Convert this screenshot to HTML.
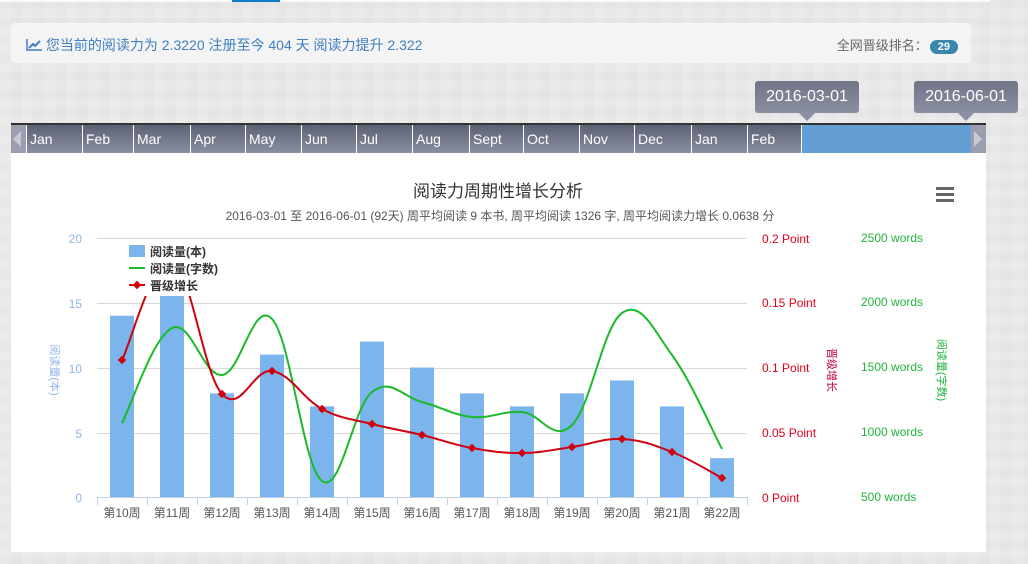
<!DOCTYPE html>
<html><head><meta charset="utf-8">
<style>
*{margin:0;padding:0;box-sizing:border-box}
body{width:1028px;height:564px;overflow:hidden;background:#e8e8e8;font-family:"Liberation Sans","Noto Sans CJK SC",sans-serif;position:relative;
background-image:linear-gradient(90deg,rgba(255,255,255,.12) 50%,transparent 50%),linear-gradient(rgba(0,0,0,.015) 50%,transparent 50%);background-size:22px 22px,18px 18px}
.top{position:absolute;left:0;top:0;width:990px;height:2px;background:#fafafa}
.topb{position:absolute;left:232px;top:0;width:48px;height:2px;background:#0e7bc6}
.info{position:absolute;left:11px;top:23px;width:960px;height:40px;background:#f4f4f4;border-radius:3px}
.info .l{position:absolute;left:15px;top:12px;font-size:14px;color:#3f7fc0}
.info .r{position:absolute;right:13px;top:12px;font-size:13px;color:#666}
.badge{display:inline-block;background:#3a87ad;color:#fff;font-weight:bold;font-size:11px;border-radius:9px;padding:1px 8px;margin-left:2px}
.tip{position:absolute;top:81px;height:32px;background:linear-gradient(#6f7587,#8a8fa1);color:#fff;font-size:16px;border-radius:3px;text-align:center;line-height:32px}
.tip:after{content:"";position:absolute;bottom:-8px;left:50%;margin-left:-8px;border:8px solid transparent;border-top-color:#8a8fa1;border-bottom:0}
.bar{position:absolute;left:11px;top:123px;width:975px;height:30px;background:linear-gradient(#5c6173,#8a8fa1);border-top:2px solid #333}
.bar span{position:absolute;top:0;height:28px;border-left:1px solid #fff;color:#fff;font-size:14px;line-height:28px;padding-left:3px}
.panel{position:absolute;left:11px;top:153px;width:975px;height:399px;background:#fff}
</style></head><body>
<div class="top"></div><div class="topb"></div>
<div class="info"><div class="l"><svg width="16" height="12" viewBox="0 0 16 12" style="vertical-align:-1px"><path d="M1 0V11H16" stroke="#3f7fc0" fill="none" stroke-width="1.5"/><path d="M3 9L7 5L9 7L14 2" stroke="#3f7fc0" fill="none" stroke-width="2"/></svg> 您当前的阅读力为 2.3220 注册至今 404 天 阅读力提升 2.322</div>
<div class="r">全网晋级排名：<span class="badge">29</span></div></div>
<div class="tip" style="left:755px;width:104px">2016-03-01</div>
<div class="tip" style="left:914px;width:104px">2016-06-01</div>
<div class="bar">
<div style="position:absolute;left:0;top:0;width:15px;height:28px;background:#9a9eae"><div style="position:absolute;left:2px;top:6px;border:8px solid transparent;border-right:8px solid #c8cad3;border-left:0"></div></div>
<span style="left:15px">Jan</span><span style="left:71px">Feb</span><span style="left:122px">Mar</span><span style="left:179px">Apr</span><span style="left:234px">May</span><span style="left:290px">Jun</span><span style="left:345px">Jul</span><span style="left:401px">Aug</span><span style="left:458px">Sept</span><span style="left:512px">Oct</span><span style="left:568px">Nov</span><span style="left:623px">Dec</span><span style="left:680px">Jan</span><span style="left:736px">Feb</span>
<div style="position:absolute;left:790px;top:0;width:170px;height:28px;background:#649fd4;border-left:1px solid #fff"></div>
<div style="position:absolute;left:960px;top:0;width:15px;height:28px;background:#9a9eae"><div style="position:absolute;left:3px;top:6px;border:8px solid transparent;border-left:8px solid #c8cad3;border-right:0"></div></div>
</div>
<div class="panel"></div>
<svg id="c" style="position:absolute;left:0;top:0" width="1028" height="564" font-family="Liberation Sans,Noto Sans CJK SC,sans-serif">
<text x="498" y="197" font-size="17" fill="#333" text-anchor="middle">阅读力周期性增长分析</text>
<text x="500" y="220" font-size="12" fill="#555" text-anchor="middle">2016-03-01 至 2016-06-01 (92天) 周平均阅读 9 本书, 周平均阅读 1326 字, 周平均阅读力增长 0.0638 分</text>
<g fill="#666"><rect x="936" y="187" width="18" height="3"/><rect x="936" y="193" width="18" height="3"/><rect x="936" y="199" width="18" height="3"/></g>
<g stroke="#d8d8d8"><line x1="97" x2="747" y1="238.5" y2="238.5"/><line x1="97" x2="747" y1="303.5" y2="303.5"/><line x1="97" x2="747" y1="368.5" y2="368.5"/><line x1="97" x2="747" y1="433.5" y2="433.5"/></g>
<g fill="#8fb6ea" font-size="12" text-anchor="end"><text x="82" y="243">20</text><text x="82" y="308">15</text><text x="82" y="373">10</text><text x="82" y="438">5</text><text x="82" y="502">0</text></g>
<text transform="translate(51,370) rotate(90)" font-size="11" fill="#8fb6ea" text-anchor="middle">阅读量(本)</text>
<g fill="#e0001b" font-size="12"><text x="762" y="243">0.2 Point</text><text x="762" y="307">0.15 Point</text><text x="762" y="372">0.1 Point</text><text x="762" y="437">0.05 Point</text><text x="762" y="502">0 Point</text></g>
<text transform="translate(828,370) rotate(90)" font-size="11" fill="#c0003b" text-anchor="middle">晋级增长</text>
<g fill="#22b33a" font-size="12"><text x="861" y="242">2500 words</text><text x="861" y="306">2000 words</text><text x="861" y="371">1500 words</text><text x="861" y="436">1000 words</text><text x="861" y="501">500 words</text></g>
<text transform="translate(938,370) rotate(90)" font-size="11" fill="#22b33a" text-anchor="middle">阅读量(字数)</text>
<g id="bars" fill="#7cb5ec"></g>
<g stroke="#c0d0e0"><line x1="97" x2="747" y1="497.5" y2="497.5"/></g>
<g id="ticks" stroke="#c0d0e0"></g>
<g id="xl" font-size="12" fill="#555" text-anchor="middle"></g>
<path id="g" fill="none" stroke="#1aba2a" stroke-width="2"/>
<path id="r" fill="none" stroke="#d0000e" stroke-width="2"/>
<g id="rd" fill="#d0000e"></g>
<rect x="120" y="240" width="108" height="56" fill="#fff"/>
<rect x="129" y="245" width="16" height="12" fill="#7cb5ec"/>
<line x1="129" x2="145" y1="268" y2="268" stroke="#1aba2a" stroke-width="2"/>
<line x1="129" x2="145" y1="285" y2="285" stroke="#d0000e" stroke-width="2"/>
<rect x="134" y="282" width="6" height="6" fill="#d0000e" transform="rotate(45 137 285)"/>
<g font-size="12" fill="#333" font-weight="bold"><text x="150" y="256">阅读量(本)</text><text x="150" y="273">阅读量(字数)</text><text x="150" y="290">晋级增长</text></g>
</svg>
<script>
var ns="http://www.w3.org/2000/svg";
function el(t,a,p){var e=document.createElementNS(ns,t);for(var k in a)e.setAttribute(k,a[k]);document.getElementById(p).appendChild(e);}
var v=[14,16,8,11,7,12,10,8,7,8,9,7,3];
for(var i=0;i<13;i++){var cx=122+50*i,h=v[i]*12.95;
el('rect',{x:cx-12,y:497-h,width:24,height:h},'bars');
el('line',{x1:97+50*i+.5,x2:97+50*i+.5,y1:497,y2:505},'ticks');
el('text',{x:cx,y:517},'xl');
document.getElementById('xl').lastChild.textContent='第'+(10+i)+'周';}
el('line',{x1:747.5,x2:747.5,y1:497,y2:505},'ticks');
function path(ys){var p=[];for(var i=0;i<ys.length;i++)p.push([122+50*i,ys[i]]);
var d='M'+p[0][0]+' '+p[0][1];
for(var i=0;i<p.length-1;i++){var p0=p[i-1]||p[i],p1=p[i],p2=p[i+1],p3=p[i+2]||p2;
var s=0.19;
d+=' C'+(p1[0]+(p2[0]-p0[0])*s)+' '+(p1[1]+(p2[1]-p0[1])*s)+' '+(p2[0]-(p3[0]-p1[0])*s)+' '+(p2[1]-(p3[1]-p1[1])*s)+' '+p2[0]+' '+p2[1];}
return d;}
var g=[423,328,375,319,481,392,402,417,412,425,313,355,449];
var r=[360,262,394,371,409,424,435,448,453,447,439,452,478];
document.getElementById('g').setAttribute('d',path(g));
document.getElementById('r').setAttribute('d',path(r));
for(var i=0;i<13;i++){var x=122+50*i;el('rect',{x:x-3,y:r[i]-3,width:6,height:6,transform:'rotate(45 '+x+' '+r[i]+')'},'rd');}
</script>
</body></html>
